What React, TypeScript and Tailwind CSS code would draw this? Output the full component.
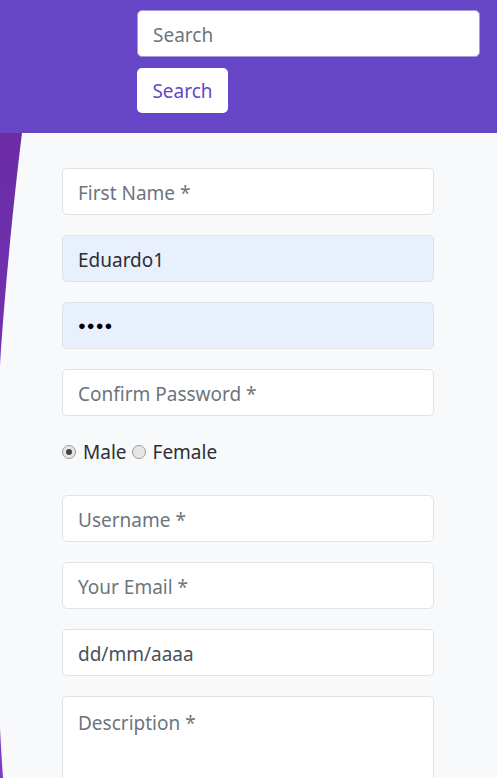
import React from "react";

const font = { fontFamily: '"Noto Sans", "Open Sans", sans-serif' };

function Field({ placeholder, value, filled, valueColor }: { placeholder?: string; value?: string; filled?: boolean; valueColor?: string }) {
  return (
    <div
      className={`h-[47px] w-full rounded-[5px] border border-[#dfe2e6] px-[15px] pt-[3px] flex items-center text-[19px] ${
        filled ? "bg-[#e8f0fe]" : "bg-white"
      }`}
    >
      {value ? (
        <span className={valueColor || "text-[#2b2f33]"}>{value}</span>
      ) : (
        <span className="text-[#6c757d]">{placeholder}</span>
      )}
    </div>
  );
}

function Radio({ checked }: { checked?: boolean }) {
  return (
    <span className="inline-flex h-[14px] w-[14px] items-center justify-center rounded-full border border-[#9a9a9a] bg-[#e6e6e6]">
      {checked && <span className="h-[6px] w-[6px] rounded-full bg-[#444]" />}
    </span>
  );
}

export default function App() {
  return (
    <div className="h-[778px] w-[497px] overflow-hidden" style={font}>
      <header className="h-[133px] bg-[#6646c6] pl-[137px] pr-[17px] pt-[10px] flex flex-col items-start gap-[11px]">
        <div className="h-[47px] w-full rounded-[5px] border border-[#a99ad8] bg-white px-[15px] pt-[3px] flex items-center text-[19px] text-[#6c757d]">
          Search
        </div>
        <button className="h-[45px] w-[91px] rounded-[5px] bg-white pt-[2px] text-[19px] text-[#6646c6]">Search</button>
      </header>
      <main className="relative h-[645px] bg-[#f8f9fa]">
        <svg className="absolute left-0 top-0" width="40" height="645" viewBox="0 0 40 645">
          <defs>
            <linearGradient id="g" x1="0" y1="0" x2="0" y2="1">
              <stop offset="0" stopColor="#6b2ca6" />
              <stop offset="1" stopColor="#7a3ec4" />
            </linearGradient>
          </defs>
          <path
            d="M0 0 L22 0 C 12 80, 3 180, 0 234 C -3 330, -3 520, 0 595 C 1 615, 2 630, 3 645 L0 645 Z"
            fill="url(#g)"
          />
        </svg>
        <div className="relative ml-[62px] mr-[63px] pt-[35px] flex flex-col gap-[20px]">
          <Field placeholder="First Name *" />
          <Field value="Eduardo1" filled />
          <div className="h-[47px] w-full rounded-[5px] border border-[#dfe2e6] bg-[#e8f0fe] px-[15px] flex items-center">
            <span className="text-[13px] tracking-[1px] text-black">●●●●</span>
          </div>
          <Field placeholder="Confirm Password *" />
          <div className="h-[32px] mb-[7px] flex items-center text-[19px] text-[#2b2f33]">
            <Radio checked />
            <span className="ml-[7px]">Male</span>
            <span className="ml-[5px] flex"><Radio /></span>
            <span className="ml-[7px]">Female</span>
          </div>
          <Field placeholder="Username *" />
          <Field placeholder="Your Email *" />
          <Field value="dd/mm/aaaa" valueColor="text-[#495057]" />
          <div className="h-[120px] w-full rounded-[5px] border border-[#dfe2e6] bg-white px-[15px] pt-[12px] text-[19px] text-[#6c757d]">
            Description *
          </div>
        </div>
      </main>
    </div>
  );
}
